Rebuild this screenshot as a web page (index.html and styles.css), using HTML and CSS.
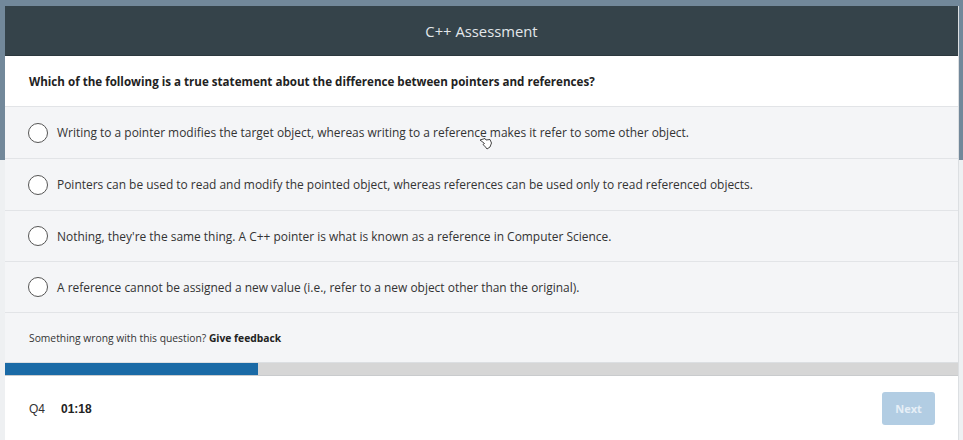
FILE: index.html
```html
<!DOCTYPE html>
<html>
<head>
<meta charset="utf-8">
<link rel="stylesheet" href="styles.css">
</head>
<body>
<div class="card">
  <div class="header">C++ Assessment</div>
  <div class="question">Which of the following is a true statement about the difference between pointers and references?</div>
  <div class="options">
    <div class="option"><span class="radio"></span><span class="label">Writing to a pointer modifies the target object, whereas writing to a reference makes it refer to some other object.</span></div>
    <div class="option"><span class="radio"></span><span class="label">Pointers can be used to read and modify the pointed object, whereas references can be used only to read referenced objects.</span></div>
    <div class="option short"><span class="radio"></span><span class="label">Nothing, they're the same thing. A C++ pointer is what is known as a reference in Computer Science.</span></div>
    <div class="option short"><span class="radio"></span><span class="label">A reference cannot be assigned a new value (i.e., refer to a new object other than the original).</span></div>
  </div>
  <div class="feedback">Something wrong with this question? <b>Give feedback</b></div>
  <div class="progress"><div class="progress-fill" style="width:253px"></div></div>
  <div class="footer">
    <span class="qnum">Q4</span>
    <span class="timer">01:18</span>
    <button class="next">Next</button>
  </div>
</div>
<svg class="cursor" width="14" height="14" viewBox="0 0 14 14"><path d="M1 3 L6 1.5 L7 3 L11 2.5 L12.5 6 L11 10 L8 12 L6.5 10 L4 7.5 L5.5 6.5 L3 4.5 Z" fill="#fff" stroke="#333" stroke-width="0.9" stroke-linejoin="round"/></svg>
</body>
</html>
```
FILE: styles.css
```css
html, body { margin: 0; padding: 0; }
body {
  width: 963px;
  height: 440px;
  overflow: hidden;
  background: linear-gradient(#72889a 0, #72889a 160px, #eef0f2 160px);
  font-family: "Open Sans", "Noto Sans", sans-serif;
  position: relative;
}
.card {
  margin: 6px 0 0 5px;
  width: 953px;
  background: #fff;
  border-right: 1px solid #dcdfe2;
}
.header {
  height: 49px;
  background: #35434a;
  color: #e3e7ea;
  font-size: 14.8px;
  display: flex;
  align-items: center;
  justify-content: center;
  border-bottom: 1px solid #2c383e;
}
.question {
  height: 51px;
  box-sizing: border-box;
  padding-left: 24px;
  display: flex;
  align-items: center;
  font-size: 11.6px;
  font-weight: 700;
  color: #222;
  border-bottom: 1px solid #e2e4e7;
}
.option {
  height: 52px;
  box-sizing: border-box;
  background: #f4f5f7;
  border-bottom: 1px solid #e2e4e7;
  display: flex;
  align-items: center;
  padding-left: 23px;
}
.option.short { height: 51px; }
.radio {
  width: 18px;
  height: 18px;
  border: 1.5px solid #555;
  border-radius: 50%;
  background: #fff;
  flex: none;
  margin-right: 9px;
}
.label {
  font-size: 11.95px;
  color: #333;
}
.feedback {
  height: 50px;
  box-sizing: border-box;
  background: #f4f5f7;
  border-bottom: 1px solid #dcdfe2;
  display: flex;
  align-items: center;
  padding-left: 24px;
  font-size: 10.3px;
  color: #333;
  white-space: pre;
}
.feedback b { color: #222; }
.progress {
  height: 12px;
  background: #d6d6d6;
}
.progress-fill {
  height: 100%;
  background: #1a6aa6;
}
.footer {
  height: 66px;
  box-sizing: border-box;
  border-top: 1px solid #c9cbcd;
  display: flex;
  align-items: center;
  padding: 0 24px;
  font-family: "Liberation Sans", Arial, sans-serif;
  font-size: 12px;
  color: #333;
}
.qnum { margin-right: 16px; }
.timer { font-weight: 700; color: #222; }
.next {
  margin-left: auto;
  width: 53px;
  height: 33px;
  border: none;
  border-radius: 3px;
  background: #b2cde3;
  color: #e6eff7;
  font-family: "Open Sans", sans-serif;
  font-weight: 700;
  font-size: 11px;
  margin-right: -1px;
}
.cursor {
  position: absolute;
  left: 479px;
  top: 137px;
}
```
